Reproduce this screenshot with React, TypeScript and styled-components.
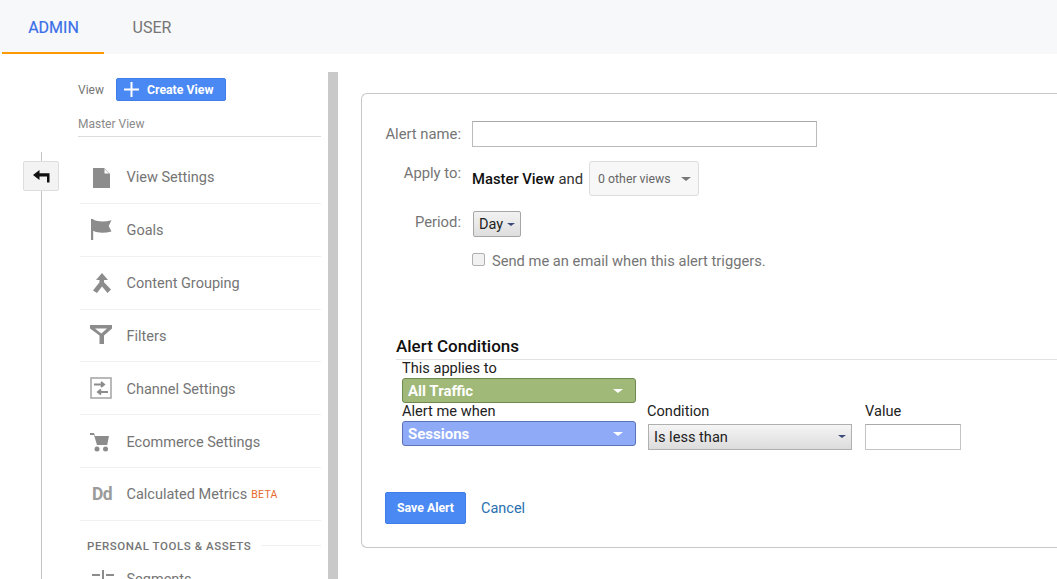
import React from "react";
import styled, { createGlobalStyle } from "styled-components";

const Global = createGlobalStyle`
  html, body { margin: 0; padding: 0; height: 579px; overflow: hidden; background: #fff; }
  body { font-family: Roboto, "Liberation Sans", sans-serif; color: #757575; }
  * { box-sizing: border-box; }
`;

const Page = styled.div`width: 1057px; height: 579px; overflow: hidden; display: flex; flex-direction: column;`;
const TabBar = styled.div`height: 54px; flex: none; background: #f7f8fa; display: flex; padding-left: 2px;`;
const Tab = styled.div<{ $active?: boolean }>`
  height: 54px; font-size: 16px; line-height: 55px; text-align: center; width: ${p => (p.$active ? "102px" : "96px")};
  padding-left: ${p => (p.$active ? "1px" : "0")};
  color: ${p => (p.$active ? "#3a6fe8" : "#757575")};
  -webkit-text-stroke: ${p => (p.$active ? "0.2px" : "0")};
  border-bottom: 2px solid ${p => (p.$active ? "#f90" : "transparent")};
`;
const Body = styled.div`flex: 1; display: flex; min-height: 0; overflow: hidden; background: #fff;`;
const Sidebar = styled.div`width: 338px; flex: none; display: flex; height: 525px;`;
const Rail = styled.div`width: 78px; flex: none; position: relative;`;
const RailLine = styled.div`position: absolute; left: 41px; top: 98px; bottom: 0; width: 1px; background: #c4c4c4;`;
const BackButton = styled.div`
  position: absolute; left: 23px; top: 107px; width: 36px; height: 30px; background: #f3f3f3;
  border: 1px solid #ddd; border-radius: 2px; display: flex; align-items: center; justify-content: center;
`;
const NavColumn = styled.div`width: 243px; flex: none; padding-top: 24px; display: flex; flex-direction: column;`;
const ViewHeader = styled.div`display: flex; align-items: center; height: 23px; gap: 12px; font-size: 12px; color: #757575;`;
const CreateButton = styled.div`
  width: 110px; height: 23px; background: #4a89f3; border: 1px solid #3f7ee8; border-radius: 2px; color: #fff;
  font-size: 12.3px; font-weight: 700; display: flex; align-items: center; padding-left: 7px; gap: 8px;
`;
const MasterLabel = styled.div`
  margin-top: 11px; height: 26px; line-height: 24px; font-size: 12px; color: #8a8a8a; border-bottom: 1px solid #dcdcdc;
`;
const Rows = styled.div`display: flex; flex-direction: column; padding-left: 2px; margin-top: 14px;`;
const Row = styled.div`
  height: 52.85px; flex: none; display: flex; align-items: center; border-bottom: 1px solid #f0f0f0;
  font-size: 14.5px; color: #757575; padding-top: 2px;
`;
const RowIcon = styled.div`width: 46.5px; height: 24px; flex: none; padding-left: 10px; display: flex; align-items: center;`;
const Beta = styled.span`font-size: 10.5px; color: #e8692c; margin-left: 4px; letter-spacing: .3px;`;
const SectionHead = styled.div`
  display: flex; align-items: center; gap: 11px; margin-top: 17px; height: 16px; padding-left: 7px;
  font-size: 11.5px; font-weight: 500; letter-spacing: .55px; color: #757575; white-space: nowrap;
  &::after { content: ""; flex: 1; height: 1px; background: #eee; }
`;
const SegmentRow = styled.div`display: flex; align-items: center; margin-top: 14px; font-size: 14.5px; color: #757575;`;
const ScrollTrack = styled.div`width: 10px; flex: none; margin-left: 7px; margin-top: 18px; background: #c9c9c9;`;

const Panel = styled.div`
  margin-left: 23px; margin-top: 39px; width: 760px; height: 455px; flex: none; background: #fff;
  border: 1px solid #c8c8c8; border-radius: 6px 0 0 6px; padding-top: 27px; border-right: 0;
`;
const FormRow = styled.div<{ $h: number; $mt?: number }>`
  display: flex; height: ${p => p.$h}px; margin-top: ${p => p.$mt ?? 0}px;
`;
const FieldLabel = styled.div<{ $top: number }>`
  width: 99px; flex: none; text-align: right; font-size: 14.8px; color: #757575; padding-top: ${p => p.$top}px; margin-right: 11px;
`;
const NameInput = styled.input`
  width: 345px; height: 26px; border: 1px solid #bbb; border-top-color: #a8a8a8; background: #fff; padding: 0; outline: 0;
`;
const ApplyValue = styled.div`display: flex; align-items: center; font-size: 14.8px; color: #333;`;
const Strong = styled.strong`font-weight: 500; color: #111; margin-right: 4px;`;
const ViewsSelect = styled.div`
  width: 110px; height: 35px; margin-left: 6px; border: 1px solid #ddd; border-radius: 3px; background: #f7f7f7; color: #666;
  font-size: 12.3px; display: flex; align-items: center; justify-content: space-between; padding: 0 7px 0 8px;
`;
const Caret = styled.span<{ $color: string; $w?: number }>`
  width: 0; height: 0; border-left: ${p => p.$w ?? 5}px solid transparent; border-right: ${p => p.$w ?? 5}px solid transparent;
  border-top: ${p => (p.$w ?? 5) - 1}px solid ${p => p.$color};
`;
const PeriodSelect = styled.div`
  width: 48px; height: 26px; margin-left: 1px; border: 1px solid #a6a6a6; border-radius: 2px;
  background: linear-gradient(#f2f2f2, #dedede); color: #222; font-size: 14.5px;
  display: flex; align-items: center; gap: 4px; padding-left: 5px;
`;
const CheckRow = styled.div`display: flex; align-items: center; padding-left: 110px; margin-top: 14px; height: 20px; font-size: 14.7px; color: #757575; gap: 7px;`;
const CheckBox = styled.span`width: 13px; height: 13px; border: 1px solid #b0b0b0; border-radius: 2px; background: #f1f1f1; margin-top: -4px;`;
const ConditionsTitle = styled.div`
  margin: 64px 0 0 34px; height: 25px; line-height: 22px; border-bottom: 1px solid #e2e2e2;
  font-size: 17px; font-weight: 500; color: #111;
`;
const ConditionsBody = styled.div`padding-left: 40px; display: flex; flex-direction: column;`;
const CondLabel = styled.div`font-size: 14.6px; color: #222; height: 18px; line-height: 16px;`;
const ColoredSelect = styled.div<{ $bg: string; $bd: string }>`
  width: 234px; height: 25px; background: ${p => p.$bg}; border: 1px solid ${p => p.$bd}; border-radius: 3px;
  color: #fff; font-size: 15px; font-weight: 700; display: flex; align-items: center; justify-content: space-between;
  padding: 0 12px 0 5px;
`;
const CondRow = styled.div`display: flex; height: 71px; margin-top: 0;`;
const CondCol = styled.div<{ $w: number }>`width: ${p => p.$w}px; flex: none; display: flex; flex-direction: column;`;
const LessSelect = styled.div`
  width: 204px; height: 26px; margin: 3px 0 0 1px; border: 1px solid #b0b0b0; background: linear-gradient(#f5f5f5, #dcdcdc);
  font-size: 14.6px; color: #222; display: flex; align-items: center; justify-content: space-between; padding: 0 5px 1px 5px;
`;
const ValueInput = styled.input`width: 96px; height: 26px; margin-top: 3px; border: 1px solid #c4c4c4; border-top-color: #aaa; padding: 0; background: #fff; outline: 0;`;
const Actions = styled.div`display: flex; align-items: center; padding-left: 23px; margin-top: 18px; gap: 15px;`;
const SaveButton = styled.div`
  width: 81px; height: 32px; background: #4a89f3; border: 1px solid #3f7ee8; border-radius: 2px; color: #fff;
  font-size: 12.3px; font-weight: 700; display: flex; align-items: center; justify-content: center; padding-bottom: 1px;
`;
const CancelLink = styled.a`font-size: 14.5px; color: #2a6fb0;`;

const G = "#8c8c8c";
const Svg = ({ w = 22, h = 24, children }: { w?: number; h?: number; children: React.ReactNode }) => (
  <svg width={w} height={h} viewBox={`0 0 ${w} ${h}`} fill={G}>{children}</svg>
);
const icons: Record<string, React.ReactNode> = {
  doc: <Svg><path d="M3 2h11l6 6v14H3z" /><path d="M14.500 3v4.500H19z" fill="#fff" /></Svg>,
  flag: <Svg><path d="M1 0h2.200v21H1zM3.200 .5c5 2.500 11 2.500 18.300.8l-2.800 5.700 2.800 5.500c-7.300 1.700-13.300 1.700-18.300-.8z" /></Svg>,
  merge: <Svg><path d="M12 1l6 7h-4v2.200l7 7.300-3.500 3.500-5.500-6.400-5 6.400L3 18.500l6.500-8.300V8H6z" /></Svg>,
  filter: <Svg><path d="M0 1h22v3.500l-8 7V20H9.500v-8.500L0 4.500z" /><path d="M5 4.500h12l-5.700 5z" fill="#fff" /></Svg>,
  channel: <svg width={22} height={24} viewBox="0 0 22 24" fill="none" stroke={G}><rect x="1" y="1" width="20" height="20" strokeWidth="1.600" stroke="#a8a8a8" /><path d="M4 7.500h9M11 5l3 2.500-3 2.500M18 15H9M11 12.500 8 15l3 2.500" strokeWidth="2" /></svg>,
  cart: <Svg><path d="M-1 3h5l1 3h14l-1.800 9H7L4 5h-5z" /><circle cx="7" cy="19" r="2.500" /><circle cx="15.500" cy="19" r="2.500" /></Svg>,
};

const BackIcon = () => (
  <svg width="17" height="13" viewBox="0 0 17 13" fill="#111"><path d="M0 5L6.500 0v3.200h10v9.300H14V6.500H6.500V10z" /></svg>
);
const SegmentsIcon = () => (
  <svg width="24" height="16" viewBox="0 0 24 16" fill={G} style={{ marginLeft: 1, marginTop: -4 }}><path d="M1 4h8v2H1zM1 9h8v2H1zM11 0h2v16h-2zM15 4h8v2h-8zM15 9h8v2h-8z" /></svg>
);

const items: [string, string][] = [
  ["doc", "View Settings"], ["flag", "Goals"], ["merge", "Content Grouping"], ["filter", "Filters"],
  ["channel", "Channel Settings"], ["cart", "Ecommerce Settings"],
];

const DdIcon = styled.span`font-size: 17.5px; font-weight: 700; color: #9a9a9a; letter-spacing: -.5px; line-height: 1; margin-left: 2px;`;

export default function App() {
  return (
    <Page>
      <Global />
      <TabBar>
        <Tab $active>ADMIN</Tab>
        <Tab>USER</Tab>
      </TabBar>
      <Body>
        <Sidebar>
          <Rail>
            <RailLine />
            <BackButton><BackIcon /></BackButton>
          </Rail>
          <NavColumn>
            <ViewHeader>
              View
              <CreateButton>
                <svg width="15" height="15" viewBox="0 0 15 15" fill="#fff"><path d="M6.500 0h2v6.500H15v2H8.500V15h-2V8.500H0v-2h6.500z" /></svg>
                Create View
              </CreateButton>
            </ViewHeader>
            <MasterLabel>Master View</MasterLabel>
            <Rows>
              {items.map(([ic, label]) => (
                <Row key={label}>
                  <RowIcon>{icons[ic]}</RowIcon>
                  {label}
                </Row>
              ))}
              <Row>
                <RowIcon><DdIcon>Dd</DdIcon></RowIcon>
                Calculated Metrics<Beta>BETA</Beta>
              </Row>
              <SectionHead>PERSONAL TOOLS &amp; ASSETS</SectionHead>
              <SegmentRow>
                <RowIcon><SegmentsIcon /></RowIcon>
                Segments
              </SegmentRow>
            </Rows>
          </NavColumn>
          <ScrollTrack />
        </Sidebar>
        <Panel>
          <FormRow $h={26}>
            <FieldLabel $top={4}>Alert name:</FieldLabel>
            <NameInput />
          </FormRow>
          <FormRow $h={35} $mt={14}>
            <FieldLabel $top={3}>Apply to:</FieldLabel>
            <ApplyValue>
              <Strong>Master View</Strong> and
              <ViewsSelect>0 other views <Caret $color="#777" /></ViewsSelect>
            </ApplyValue>
          </FormRow>
          <FormRow $h={26} $mt={15}>
            <FieldLabel $top={2}>Period:</FieldLabel>
            <PeriodSelect>Day <Caret $color="#3c4a78" $w={4.5} /></PeriodSelect>
          </FormRow>
          <CheckRow>
            <CheckBox />
            Send me an email when this alert triggers.
          </CheckRow>
          <ConditionsTitle>Alert Conditions</ConditionsTitle>
          <ConditionsBody>
            <CondLabel>This applies to</CondLabel>
            <ColoredSelect $bg="#a0b878" $bd="#6e8a50">All Traffic <Caret $color="#fff" $w={5.5} /></ColoredSelect>
            <CondRow>
              <CondCol $w={245}>
                <CondLabel>Alert me when</CondLabel>
                <ColoredSelect $bg="#8fabf8" $bd="#5a72b8">Sessions <Caret $color="#fff" $w={5.5} /></ColoredSelect>
              </CondCol>
              <CondCol $w={218}>
                <CondLabel>Condition</CondLabel>
                <LessSelect>Is less than <Caret $color="#3c4a78" $w={4.5} /></LessSelect>
              </CondCol>
              <CondCol $w={100}>
                <CondLabel>Value</CondLabel>
                <ValueInput />
              </CondCol>
            </CondRow>
          </ConditionsBody>
          <Actions>
            <SaveButton>Save Alert</SaveButton>
            <CancelLink>Cancel</CancelLink>
          </Actions>
        </Panel>
      </Body>
    </Page>
  );
}
